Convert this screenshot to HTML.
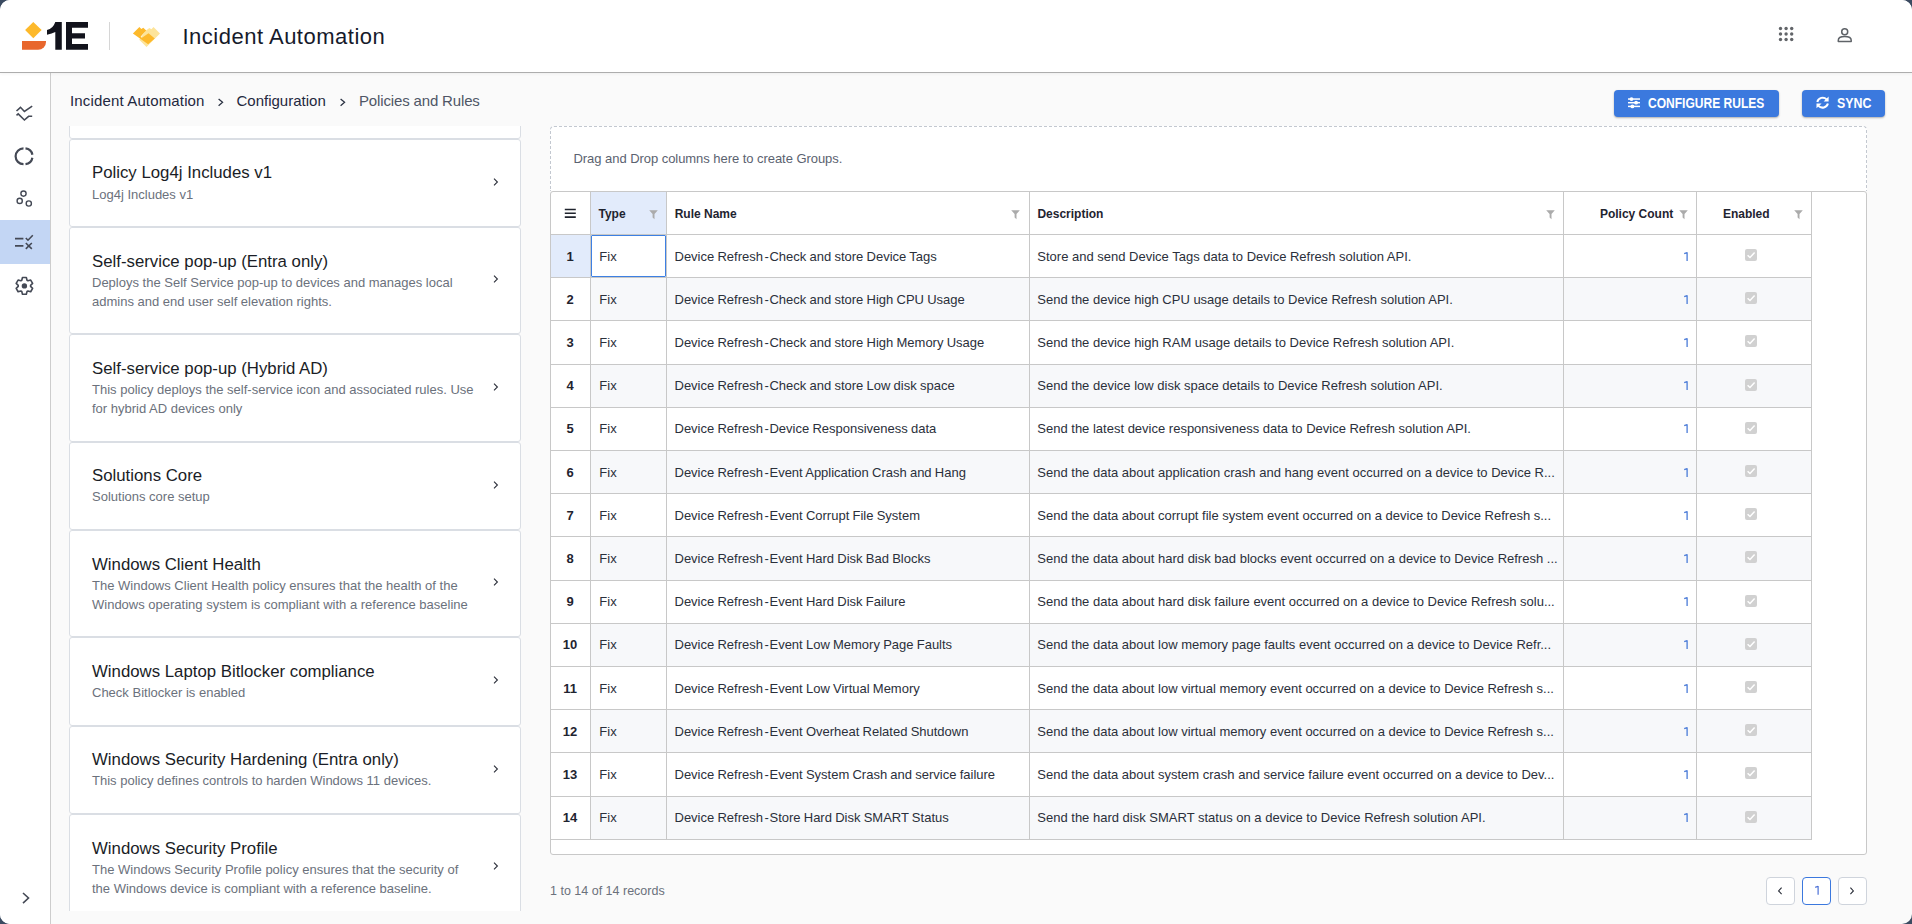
<!DOCTYPE html><html><head><meta charset="utf-8"><style>
*{box-sizing:border-box;margin:0;padding:0}
html,body{width:1912px;height:924px;overflow:hidden;background:#3b4b61;font-family:"Liberation Sans", sans-serif}
.win{position:absolute;left:0;top:0;width:1912px;height:924px;border-radius:10px;overflow:hidden;background:#fafafa}
.abs{position:absolute;white-space:nowrap}
.hdr{position:absolute;left:0;top:0;width:1912px;height:73px;background:#fff;border-bottom:1px solid #adadad;box-shadow:0 1px 3px rgba(0,0,0,.05);z-index:2}
.side{position:absolute;left:0;top:73px;width:51px;height:851px;background:#fff;border-right:1px solid #cdcdcd}
.card{position:absolute;left:69px;width:452px;background:#fff;border:1px solid #dadee4;border-radius:3px}
.ct{position:absolute;left:22px;font-size:16.8px;color:#1a1d26;white-space:nowrap}
.cd{position:absolute;left:22px;font-size:13px;color:#6b717c;white-space:nowrap;line-height:19px}
.chev{position:absolute;left:423px;width:8px;height:10px}
.btn{position:absolute;top:90px;height:27px;background:#3b79de;border-radius:4px;box-shadow:0 1px 2px rgba(0,0,0,.3);color:#fff;font-weight:700;font-size:12px}
.grid{position:absolute;left:550px;top:191px;width:1317px;height:664px;border:1px solid #c8c8c8;border-radius:3px;background:#fff;overflow:hidden}
.gp{position:absolute;left:550px;top:126px;width:1317px;height:65px;border:1px dashed #c3c8d0;border-bottom:none;border-radius:4px 4px 0 0;background:#fff}
.hc{position:absolute;font-size:12px;font-weight:700;color:#1f2430;white-space:nowrap}
.cell{position:absolute;font-size:13px;color:#2b303b;white-space:nowrap;overflow:hidden;text-overflow:ellipsis}
.vl{position:absolute;width:1px;background:#c8c8c8}
.hl{position:absolute;height:1px;background:#c8c8c8}
.pg{position:absolute;top:877px;width:29px;height:28px;border:1px solid #cfd4dc;border-radius:4px;background:#fff}
</style></head><body><div class="win">
<div class="hdr">
<svg class="abs" style="left:0;top:0" width="120" height="72" viewBox="0 0 120 72">
<polygon points="33.3,21.9 41.6,30.1 33.3,38.3 25.1,30.1" fill="#fdb92b"/>
<path d="M22,41 H46 V42 A7.8,7.8 0 0 1 38.2,49.8 H22 Z" fill="#e8662c"/>
<path d="M55.3,22.1 H61.8 V49.8 H55.3 V32 Q52,33.8 47,34.7 V30 Q53,29 55.3,22.1 Z" fill="#12131c"/>
<path d="M66,22.1 H88 V27.8 H72 V33.2 H85 V38.6 H72 V44 H88 V49.8 H66 Z" fill="#12131c"/>
<rect x="109" y="22" width="1" height="28" fill="#d6d6d6"/>
</svg>
<svg class="abs" style="left:130px;top:24px" width="34" height="26" viewBox="130 24 34 26">
<polygon points="145.9,30.6 149.4,27.9 151.4,29.2 153.5,27 160,33.6 146.5,47 139.2,39.8" fill="#fde49a"/>
<polygon points="132.9,33.6 139.4,27.1 141.3,28.9 143.3,27.8 146.2,30.5 140.7,36.6 141.6,38 148.5,33.2 154.8,38.4 148.1,44.2" fill="#fdb92b"/>
</svg>
<div class="abs" style="left:182.5px;top:23.58px;font-size:22px;line-height:26px;letter-spacing:0.5px;color:#161a2b">Incident Automation</div>
<svg class="abs" style="left:1770px;top:20px" width="30" height="30" viewBox="1770 20 30 30"><circle cx="1780.5" cy="28.5" r="1.7" fill="#626569"/><circle cx="1780.5" cy="34.0" r="1.7" fill="#626569"/><circle cx="1780.5" cy="39.5" r="1.7" fill="#626569"/><circle cx="1786.1" cy="28.5" r="1.7" fill="#626569"/><circle cx="1786.1" cy="34.0" r="1.7" fill="#626569"/><circle cx="1786.1" cy="39.5" r="1.7" fill="#626569"/><circle cx="1791.7" cy="28.5" r="1.7" fill="#626569"/><circle cx="1791.7" cy="34.0" r="1.7" fill="#626569"/><circle cx="1791.7" cy="39.5" r="1.7" fill="#626569"/></svg>
<svg class="abs" style="left:1830px;top:20px" width="30" height="30" viewBox="1830 20 30 30">
<circle cx="1844.7" cy="31.7" r="3" fill="none" stroke="#5f6368" stroke-width="1.5"/>
<path d="M1838.3,41.6 V40.3 Q1838.3,36.6 1844.7,36.6 Q1851.2,36.6 1851.2,40.3 V41.6 Z" fill="none" stroke="#5f6368" stroke-width="1.5" stroke-linejoin="round"/>
</svg>
</div>
<div class="side"></div>
<div class="abs" style="left:0;top:220px;width:50px;height:44px;background:#c3d6f4"></div>
<svg class="abs" style="left:0;top:73px" width="50" height="851" viewBox="0 73 50 851">
<g fill="none" stroke="#444955" stroke-width="1.6" stroke-linecap="butt" stroke-linejoin="miter">
<polyline points="16.5,111 20.5,107.3 24.4,111.5 32.2,106.2"/>
<polyline points="16.5,115.3 18.2,113.9 24.4,120 28.6,116.3 32.2,116.3"/>
<path d="M23.5,148.4 A7.9,7.9 0 0 0 23.5,164.2" stroke-width="2.2"/>
<path d="M25.5,148.4 A7.9,7.9 0 0 1 32.4,154.8" stroke-width="2.2"/>
<path d="M32.4,157.8 A7.9,7.9 0 0 1 25.5,164.2" stroke-width="2.2"/>
<circle cx="23.5" cy="193.6" r="2.6" stroke-width="1.4"/>
<circle cx="19.7" cy="200.9" r="2.6" stroke-width="1.4"/>
<circle cx="28.8" cy="203.5" r="2.6" stroke-width="1.4"/>
<line x1="15" y1="238.7" x2="23.4" y2="238.7" stroke-width="1.8"/>
<line x1="15" y1="245.8" x2="23.4" y2="245.8" stroke-width="1.8"/>
<polyline points="25.8,238 28,240.2 32.8,235.3" stroke-width="1.6"/>
<line x1="25.8" y1="243" x2="31.8" y2="248.8" stroke-width="1.6"/>
<line x1="31.8" y1="243" x2="25.8" y2="248.8" stroke-width="1.6"/>
<polyline points="23,893 28.5,898 23,903.2" stroke-width="1.6"/>
</g>
<g transform="translate(24.4,285.9)">
<path d="M-2.62,-5.62 L-1.93,-8.38 L1.93,-8.38 L2.62,-5.62 L3.56,-5.08 L6.29,-5.87 L8.22,-2.51 L6.18,-0.54 L6.18,0.54 L8.22,2.51 L6.29,5.87 L3.56,5.08 L2.62,5.62 L1.93,8.38 L-1.93,8.38 L-2.62,5.62 L-3.56,5.08 L-6.29,5.87 L-8.22,2.51 L-6.18,0.54 L-6.18,-0.54 L-8.22,-2.51 L-6.29,-5.87 L-3.56,-5.08 Z" fill="none" stroke="#444955" stroke-width="1.6" stroke-linejoin="round"/>
<circle cx="0" cy="0" r="2.7" fill="#444955"/>
</g>
</svg>
<div class="abs" style="left:70px;top:92.20px;font-size:15px;line-height:18px;color:#1f2840;letter-spacing:0.15px">Incident Automation</div>
<div class="abs" style="left:236.5px;top:92.20px;font-size:15px;line-height:18px;color:#1f2840">Configuration</div>
<div class="abs" style="left:359px;top:92.20px;font-size:15px;line-height:18px;color:#4f5666;letter-spacing:-0.15px">Policies and Rules</div>
<svg class="abs" style="left:217.6px;top:96px" width="8" height="12" viewBox="0 0 8 12"><polyline points="0.6,2.9 4.6,6.3 0.6,9.8" fill="none" stroke="#2a3142" stroke-width="1.25"/></svg>
<svg class="abs" style="left:339.6px;top:96px" width="8" height="12" viewBox="0 0 8 12"><polyline points="0.6,2.9 4.6,6.3 0.6,9.8" fill="none" stroke="#2a3142" stroke-width="1.25"/></svg>
<div class="btn" style="left:1614px;width:165px"><svg class="abs" style="left:13px;top:5px" width="15" height="14" viewBox="0 0 15 14"><g stroke="#fff" stroke-width="1.5"><line x1="1" y1="4.05" x2="13" y2="4.05"/><line x1="1" y1="7.7" x2="13" y2="7.7"/><line x1="1" y1="11.4" x2="13" y2="11.4"/></g><g fill="#fff"><circle cx="4.5" cy="4.05" r="1.9"/><circle cx="9.1" cy="7.7" r="1.9"/><circle cx="5.4" cy="11.4" r="1.9"/></g></svg><div class="abs" style="left:34.3px;top:4.78px;font-size:14.5px;line-height:16px;transform:scaleX(0.83);transform-origin:0 0">CONFIGURE RULES</div></div>
<div class="btn" style="left:1802px;width:83px"><svg class="abs" style="left:13px;top:5px" width="15" height="15" viewBox="0 0 15 15"><g fill="none" stroke="#fff" stroke-width="2"><path d="M2.3,6.9 A5.5,5.5 0 0 1 11.6,4.4"/><path d="M12.9,8.4 A5.5,5.5 0 0 1 3.5,10.8"/></g><polygon points="8.6,6.4 13.6,6.4 13.6,1.6" fill="#fff"/><polygon points="1.5,8.4 6.6,8.4 1.5,13.2" fill="#fff"/></svg><div class="abs" style="left:35px;top:4.78px;font-size:14.5px;line-height:16px;transform:scaleX(0.853);transform-origin:0 0">SYNC</div></div>
<div class="abs" style="left:69px;top:126px;width:453px;height:785px;overflow:hidden">
<div class="card" style="left:0;top:-100px;height:113px">
</div>
<div class="card" style="left:0;top:13px;height:88px">
<div class="ct" style="top:22.68px;line-height:20px;">Policy Log4j Includes v1</div>
<div class="cd" style="top:45.20px;">Log4j Includes v1</div>
<svg class="chev" style="top:36.8px;left:422.2px" viewBox="0 0 8 10"><polyline points="2,1.6 5.4,5 2,8.4" fill="none" stroke="#2b2f3a" stroke-width="1.1"/></svg>
</div>
<div class="card" style="left:0;top:101px;height:107px">
<div class="ct" style="top:23.68px;line-height:20px;">Self-service pop-up (Entra only)</div>
<div class="cd" style="top:45.20px;">Deploys the Self Service pop-up to devices and manages local<br>admins and end user self elevation rights.</div>
<svg class="chev" style="top:46.3px;left:422.2px" viewBox="0 0 8 10"><polyline points="2,1.6 5.4,5 2,8.4" fill="none" stroke="#2b2f3a" stroke-width="1.1"/></svg>
</div>
<div class="card" style="left:0;top:208px;height:108px">
<div class="ct" style="top:23.68px;line-height:20px;">Self-service pop-up (Hybrid AD)</div>
<div class="cd" style="top:45.20px;">This policy deploys the self-service icon and associated rules. Use<br>for hybrid AD devices only</div>
<svg class="chev" style="top:46.8px;left:422.2px" viewBox="0 0 8 10"><polyline points="2,1.6 5.4,5 2,8.4" fill="none" stroke="#2b2f3a" stroke-width="1.1"/></svg>
</div>
<div class="card" style="left:0;top:316px;height:88px">
<div class="ct" style="top:22.68px;line-height:20px;">Solutions Core</div>
<div class="cd" style="top:44.20px;">Solutions core setup</div>
<svg class="chev" style="top:36.8px;left:422.2px" viewBox="0 0 8 10"><polyline points="2,1.6 5.4,5 2,8.4" fill="none" stroke="#2b2f3a" stroke-width="1.1"/></svg>
</div>
<div class="card" style="left:0;top:404px;height:107px">
<div class="ct" style="top:23.68px;line-height:20px;">Windows Client Health</div>
<div class="cd" style="top:45.20px;">The Windows Client Health policy ensures that the health of the<br>Windows operating system is compliant with a reference baseline</div>
<svg class="chev" style="top:46.3px;left:422.2px" viewBox="0 0 8 10"><polyline points="2,1.6 5.4,5 2,8.4" fill="none" stroke="#2b2f3a" stroke-width="1.1"/></svg>
</div>
<div class="card" style="left:0;top:511px;height:89px">
<div class="ct" style="top:23.68px;line-height:20px;">Windows Laptop Bitlocker compliance</div>
<div class="cd" style="top:45.20px;">Check Bitlocker is enabled</div>
<svg class="chev" style="top:37.3px;left:422.2px" viewBox="0 0 8 10"><polyline points="2,1.6 5.4,5 2,8.4" fill="none" stroke="#2b2f3a" stroke-width="1.1"/></svg>
</div>
<div class="card" style="left:0;top:600px;height:88px">
<div class="ct" style="top:22.68px;line-height:20px;">Windows Security Hardening (Entra only)</div>
<div class="cd" style="top:44.20px;">This policy defines controls to harden Windows 11 devices.</div>
<svg class="chev" style="top:36.8px;left:422.2px" viewBox="0 0 8 10"><polyline points="2,1.6 5.4,5 2,8.4" fill="none" stroke="#2b2f3a" stroke-width="1.1"/></svg>
</div>
<div class="card" style="left:0;top:688px;height:107px">
<div class="ct" style="top:23.68px;line-height:20px;">Windows Security Profile</div>
<div class="cd" style="top:45.20px;">The Windows Security Profile policy ensures that the security of<br>the Windows device is compliant with a reference baseline.</div>
<svg class="chev" style="top:46.3px;left:422.2px" viewBox="0 0 8 10"><polyline points="2,1.6 5.4,5 2,8.4" fill="none" stroke="#2b2f3a" stroke-width="1.1"/></svg>
</div>
</div>
<div class="gp"></div>
<div class="abs" style="left:573.5px;top:150.50px;font-size:13px;line-height:16px;color:#5b6270;letter-spacing:-0.05px">Drag and Drop columns here to create Groups.</div>
<div class="grid">
<div class="abs" style="left:40px;top:86.2px;width:1220px;height:42.2px;background:#f7f8fa"></div>
<div class="abs" style="left:40px;top:172.6px;width:1220px;height:42.2px;background:#f7f8fa"></div>
<div class="abs" style="left:40px;top:259.0px;width:1220px;height:42.2px;background:#f7f8fa"></div>
<div class="abs" style="left:40px;top:345.4px;width:1220px;height:42.2px;background:#f7f8fa"></div>
<div class="abs" style="left:40px;top:431.8px;width:1220px;height:42.2px;background:#f7f8fa"></div>
<div class="abs" style="left:40px;top:518.2px;width:1220px;height:42.2px;background:#f7f8fa"></div>
<div class="abs" style="left:40px;top:604.6px;width:1220px;height:42.2px;background:#f7f8fa"></div>
<div class="abs" style="left:40px;top:0;width:75px;height:42px;background:#e2ebfb"></div>
<div class="abs" style="left:0;top:43px;width:39px;height:42px;background:#e2ebfb"></div>
<div class="hl" style="left:0;top:42px;width:1260px"></div>
<div class="hl" style="left:0;top:85.2px;width:1260px"></div>
<div class="hl" style="left:0;top:128.4px;width:1260px"></div>
<div class="hl" style="left:0;top:171.6px;width:1260px"></div>
<div class="hl" style="left:0;top:214.8px;width:1260px"></div>
<div class="hl" style="left:0;top:258.0px;width:1260px"></div>
<div class="hl" style="left:0;top:301.2px;width:1260px"></div>
<div class="hl" style="left:0;top:344.4px;width:1260px"></div>
<div class="hl" style="left:0;top:387.6px;width:1260px"></div>
<div class="hl" style="left:0;top:430.8px;width:1260px"></div>
<div class="hl" style="left:0;top:474.0px;width:1260px"></div>
<div class="hl" style="left:0;top:517.2px;width:1260px"></div>
<div class="hl" style="left:0;top:560.4px;width:1260px"></div>
<div class="hl" style="left:0;top:603.6px;width:1260px"></div>
<div class="hl" style="left:0;top:646.8px;width:1260px"></div>
<div class="vl" style="left:39px;top:0;height:648px"></div>
<div class="vl" style="left:115px;top:0;height:648px"></div>
<div class="vl" style="left:478px;top:0;height:648px"></div>
<div class="vl" style="left:1012px;top:0;height:648px"></div>
<div class="vl" style="left:1145px;top:0;height:648px"></div>
<div class="vl" style="left:1260px;top:0;height:648px"></div>
<svg class="abs" style="left:13px;top:16px" width="13" height="11" viewBox="0 0 13 11"><g stroke="#20242e" stroke-width="1.6"><line x1="0.8" y1="1.5" x2="11.8" y2="1.5"/><line x1="0.8" y1="5.3" x2="11.8" y2="5.3"/><line x1="0.8" y1="9.1" x2="11.8" y2="9.1"/></g></svg>
<div class="hc" style="left:47.5px;top:13.74px;line-height:16px">Type</div>
<svg class="abs" style="left:98.2px;top:18.0px" width="10" height="10" viewBox="0 0 10 10"><path d="M0.2,0.2 H8.8 L5.5,3.9 V9.2 L3.6,7.6 V3.9 Z" fill="#ababab"/></svg>
<div class="hc" style="left:123.7px;top:13.74px;line-height:16px">Rule Name</div>
<svg class="abs" style="left:460.1px;top:18.0px" width="10" height="10" viewBox="0 0 10 10"><path d="M0.2,0.2 H8.8 L5.5,3.9 V9.2 L3.6,7.6 V3.9 Z" fill="#ababab"/></svg>
<div class="hc" style="left:486.4px;top:13.74px;line-height:16px">Description</div>
<svg class="abs" style="left:995.0px;top:18.0px" width="10" height="10" viewBox="0 0 10 10"><path d="M0.2,0.2 H8.8 L5.5,3.9 V9.2 L3.6,7.6 V3.9 Z" fill="#ababab"/></svg>
<div class="hc" style="left:1048.9px;top:13.74px;line-height:16px">Policy Count</div>
<svg class="abs" style="left:1128.1px;top:18.0px" width="10" height="10" viewBox="0 0 10 10"><path d="M0.2,0.2 H8.8 L5.5,3.9 V9.2 L3.6,7.6 V3.9 Z" fill="#ababab"/></svg>
<div class="hc" style="left:1171.9px;top:13.74px;line-height:16px">Enabled</div>
<svg class="abs" style="left:1242.8px;top:18.0px" width="10" height="10" viewBox="0 0 10 10"><path d="M0.2,0.2 H8.8 L5.5,3.9 V9.2 L3.6,7.6 V3.9 Z" fill="#ababab"/></svg>
<div class="hc" style="left:-1px;width:40px;text-align:center;top:56.60px;line-height:16px;font-size:13px">1</div>
<div class="cell" style="left:48.299999999999955px;top:56.60px;line-height:16px">Fix</div>
<div class="cell" style="left:123.5px;width:350px;top:56.60px;line-height:16px;word-spacing:-0.4px">Device Refresh<span style="margin-right:-2px;word-spacing:0"> </span>-<span style="margin-right:-3.1px;word-spacing:0"> </span>Check and store Device Tags</div>
<div class="cell" style="left:486.29999999999995px;width:523px;top:56.60px;line-height:16px;text-overflow:clip">Store and send Device Tags data to Device Refresh solution API.</div>
<svg class="abs" style="left:1131px;top:58.0px" width="8" height="13" viewBox="0 0 8 13"><path d="M2.2,3.7 L5.1,2.6 M5.1,2.3 V11" fill="none" stroke="#4a7bd8" stroke-width="1.3"/></svg>
<div class="abs" style="left:1194px;top:57.0px;width:12px;height:12px;border-radius:2px;background:#d1d1d1"><svg class="abs" style="left:0;top:0" width="12" height="12" viewBox="0 0 12 12"><polyline points="2.6,6.2 5,8.5 9.6,3.6" fill="none" stroke="#fff" stroke-width="1.5"/></svg></div>
<div class="hc" style="left:-1px;width:40px;text-align:center;top:99.80px;line-height:16px;font-size:13px">2</div>
<div class="cell" style="left:48.299999999999955px;top:99.80px;line-height:16px">Fix</div>
<div class="cell" style="left:123.5px;width:350px;top:99.80px;line-height:16px;word-spacing:-0.4px">Device Refresh<span style="margin-right:-2px;word-spacing:0"> </span>-<span style="margin-right:-3.1px;word-spacing:0"> </span>Check and store High CPU Usage</div>
<div class="cell" style="left:486.29999999999995px;width:523px;top:99.80px;line-height:16px;text-overflow:clip">Send the device high CPU usage details to Device Refresh solution API.</div>
<svg class="abs" style="left:1131px;top:101.0px" width="8" height="13" viewBox="0 0 8 13"><path d="M2.2,3.7 L5.1,2.6 M5.1,2.3 V11" fill="none" stroke="#4a7bd8" stroke-width="1.3"/></svg>
<div class="abs" style="left:1194px;top:100.2px;width:12px;height:12px;border-radius:2px;background:#d1d1d1"><svg class="abs" style="left:0;top:0" width="12" height="12" viewBox="0 0 12 12"><polyline points="2.6,6.2 5,8.5 9.6,3.6" fill="none" stroke="#fff" stroke-width="1.5"/></svg></div>
<div class="hc" style="left:-1px;width:40px;text-align:center;top:143.00px;line-height:16px;font-size:13px">3</div>
<div class="cell" style="left:48.299999999999955px;top:143.00px;line-height:16px">Fix</div>
<div class="cell" style="left:123.5px;width:350px;top:143.00px;line-height:16px;word-spacing:-0.4px">Device Refresh<span style="margin-right:-2px;word-spacing:0"> </span>-<span style="margin-right:-3.1px;word-spacing:0"> </span>Check and store High Memory Usage</div>
<div class="cell" style="left:486.29999999999995px;width:523px;top:143.00px;line-height:16px;text-overflow:clip">Send the device high RAM usage details to Device Refresh solution API.</div>
<svg class="abs" style="left:1131px;top:144.0px" width="8" height="13" viewBox="0 0 8 13"><path d="M2.2,3.7 L5.1,2.6 M5.1,2.3 V11" fill="none" stroke="#4a7bd8" stroke-width="1.3"/></svg>
<div class="abs" style="left:1194px;top:143.4px;width:12px;height:12px;border-radius:2px;background:#d1d1d1"><svg class="abs" style="left:0;top:0" width="12" height="12" viewBox="0 0 12 12"><polyline points="2.6,6.2 5,8.5 9.6,3.6" fill="none" stroke="#fff" stroke-width="1.5"/></svg></div>
<div class="hc" style="left:-1px;width:40px;text-align:center;top:186.20px;line-height:16px;font-size:13px">4</div>
<div class="cell" style="left:48.299999999999955px;top:186.20px;line-height:16px">Fix</div>
<div class="cell" style="left:123.5px;width:350px;top:186.20px;line-height:16px;word-spacing:-0.4px">Device Refresh<span style="margin-right:-2px;word-spacing:0"> </span>-<span style="margin-right:-3.1px;word-spacing:0"> </span>Check and store Low disk space</div>
<div class="cell" style="left:486.29999999999995px;width:523px;top:186.20px;line-height:16px;text-overflow:clip">Send the device low disk space details to Device Refresh solution API.</div>
<svg class="abs" style="left:1131px;top:187.0px" width="8" height="13" viewBox="0 0 8 13"><path d="M2.2,3.7 L5.1,2.6 M5.1,2.3 V11" fill="none" stroke="#4a7bd8" stroke-width="1.3"/></svg>
<div class="abs" style="left:1194px;top:186.6px;width:12px;height:12px;border-radius:2px;background:#d1d1d1"><svg class="abs" style="left:0;top:0" width="12" height="12" viewBox="0 0 12 12"><polyline points="2.6,6.2 5,8.5 9.6,3.6" fill="none" stroke="#fff" stroke-width="1.5"/></svg></div>
<div class="hc" style="left:-1px;width:40px;text-align:center;top:229.40px;line-height:16px;font-size:13px">5</div>
<div class="cell" style="left:48.299999999999955px;top:229.40px;line-height:16px">Fix</div>
<div class="cell" style="left:123.5px;width:350px;top:229.40px;line-height:16px;word-spacing:-0.4px">Device Refresh<span style="margin-right:-2px;word-spacing:0"> </span>-<span style="margin-right:-3.1px;word-spacing:0"> </span>Device Responsiveness data</div>
<div class="cell" style="left:486.29999999999995px;width:523px;top:229.40px;line-height:16px;text-overflow:clip">Send the latest device responsiveness data to Device Refresh solution API.</div>
<svg class="abs" style="left:1131px;top:230.0px" width="8" height="13" viewBox="0 0 8 13"><path d="M2.2,3.7 L5.1,2.6 M5.1,2.3 V11" fill="none" stroke="#4a7bd8" stroke-width="1.3"/></svg>
<div class="abs" style="left:1194px;top:229.8px;width:12px;height:12px;border-radius:2px;background:#d1d1d1"><svg class="abs" style="left:0;top:0" width="12" height="12" viewBox="0 0 12 12"><polyline points="2.6,6.2 5,8.5 9.6,3.6" fill="none" stroke="#fff" stroke-width="1.5"/></svg></div>
<div class="hc" style="left:-1px;width:40px;text-align:center;top:272.60px;line-height:16px;font-size:13px">6</div>
<div class="cell" style="left:48.299999999999955px;top:272.60px;line-height:16px">Fix</div>
<div class="cell" style="left:123.5px;width:350px;top:272.60px;line-height:16px;word-spacing:-0.4px">Device Refresh<span style="margin-right:-2px;word-spacing:0"> </span>-<span style="margin-right:-3.1px;word-spacing:0"> </span>Event Application Crash and Hang</div>
<div class="cell" style="left:486.29999999999995px;width:523px;top:272.60px;line-height:16px;text-overflow:clip">Send the data about application crash and hang event occurred on a device to Device R...</div>
<svg class="abs" style="left:1131px;top:274.0px" width="8" height="13" viewBox="0 0 8 13"><path d="M2.2,3.7 L5.1,2.6 M5.1,2.3 V11" fill="none" stroke="#4a7bd8" stroke-width="1.3"/></svg>
<div class="abs" style="left:1194px;top:273.0px;width:12px;height:12px;border-radius:2px;background:#d1d1d1"><svg class="abs" style="left:0;top:0" width="12" height="12" viewBox="0 0 12 12"><polyline points="2.6,6.2 5,8.5 9.6,3.6" fill="none" stroke="#fff" stroke-width="1.5"/></svg></div>
<div class="hc" style="left:-1px;width:40px;text-align:center;top:315.80px;line-height:16px;font-size:13px">7</div>
<div class="cell" style="left:48.299999999999955px;top:315.80px;line-height:16px">Fix</div>
<div class="cell" style="left:123.5px;width:350px;top:315.80px;line-height:16px;word-spacing:-0.4px">Device Refresh<span style="margin-right:-2px;word-spacing:0"> </span>-<span style="margin-right:-3.1px;word-spacing:0"> </span>Event Corrupt File System</div>
<div class="cell" style="left:486.29999999999995px;width:523px;top:315.80px;line-height:16px;text-overflow:clip">Send the data about corrupt file system event occurred on a device to Device Refresh s...</div>
<svg class="abs" style="left:1131px;top:317.0px" width="8" height="13" viewBox="0 0 8 13"><path d="M2.2,3.7 L5.1,2.6 M5.1,2.3 V11" fill="none" stroke="#4a7bd8" stroke-width="1.3"/></svg>
<div class="abs" style="left:1194px;top:316.2px;width:12px;height:12px;border-radius:2px;background:#d1d1d1"><svg class="abs" style="left:0;top:0" width="12" height="12" viewBox="0 0 12 12"><polyline points="2.6,6.2 5,8.5 9.6,3.6" fill="none" stroke="#fff" stroke-width="1.5"/></svg></div>
<div class="hc" style="left:-1px;width:40px;text-align:center;top:359.00px;line-height:16px;font-size:13px">8</div>
<div class="cell" style="left:48.299999999999955px;top:359.00px;line-height:16px">Fix</div>
<div class="cell" style="left:123.5px;width:350px;top:359.00px;line-height:16px;word-spacing:-0.4px">Device Refresh<span style="margin-right:-2px;word-spacing:0"> </span>-<span style="margin-right:-3.1px;word-spacing:0"> </span>Event Hard Disk Bad Blocks</div>
<div class="cell" style="left:486.29999999999995px;width:523px;top:359.00px;line-height:16px;text-overflow:clip">Send the data about hard disk bad blocks event occurred on a device to Device Refresh ...</div>
<svg class="abs" style="left:1131px;top:360.0px" width="8" height="13" viewBox="0 0 8 13"><path d="M2.2,3.7 L5.1,2.6 M5.1,2.3 V11" fill="none" stroke="#4a7bd8" stroke-width="1.3"/></svg>
<div class="abs" style="left:1194px;top:359.4px;width:12px;height:12px;border-radius:2px;background:#d1d1d1"><svg class="abs" style="left:0;top:0" width="12" height="12" viewBox="0 0 12 12"><polyline points="2.6,6.2 5,8.5 9.6,3.6" fill="none" stroke="#fff" stroke-width="1.5"/></svg></div>
<div class="hc" style="left:-1px;width:40px;text-align:center;top:402.20px;line-height:16px;font-size:13px">9</div>
<div class="cell" style="left:48.299999999999955px;top:402.20px;line-height:16px">Fix</div>
<div class="cell" style="left:123.5px;width:350px;top:402.20px;line-height:16px;word-spacing:-0.4px">Device Refresh<span style="margin-right:-2px;word-spacing:0"> </span>-<span style="margin-right:-3.1px;word-spacing:0"> </span>Event Hard Disk Failure</div>
<div class="cell" style="left:486.29999999999995px;width:523px;top:402.20px;line-height:16px;text-overflow:clip">Send the data about hard disk failure event occurred on a device to Device Refresh solu...</div>
<svg class="abs" style="left:1131px;top:403.0px" width="8" height="13" viewBox="0 0 8 13"><path d="M2.2,3.7 L5.1,2.6 M5.1,2.3 V11" fill="none" stroke="#4a7bd8" stroke-width="1.3"/></svg>
<div class="abs" style="left:1194px;top:402.6px;width:12px;height:12px;border-radius:2px;background:#d1d1d1"><svg class="abs" style="left:0;top:0" width="12" height="12" viewBox="0 0 12 12"><polyline points="2.6,6.2 5,8.5 9.6,3.6" fill="none" stroke="#fff" stroke-width="1.5"/></svg></div>
<div class="hc" style="left:-1px;width:40px;text-align:center;top:445.40px;line-height:16px;font-size:13px">10</div>
<div class="cell" style="left:48.299999999999955px;top:445.40px;line-height:16px">Fix</div>
<div class="cell" style="left:123.5px;width:350px;top:445.40px;line-height:16px;word-spacing:-0.4px">Device Refresh<span style="margin-right:-2px;word-spacing:0"> </span>-<span style="margin-right:-3.1px;word-spacing:0"> </span>Event Low Memory Page Faults</div>
<div class="cell" style="left:486.29999999999995px;width:523px;top:445.40px;line-height:16px;text-overflow:clip">Send the data about low memory page faults event occurred on a device to Device Refr...</div>
<svg class="abs" style="left:1131px;top:446.0px" width="8" height="13" viewBox="0 0 8 13"><path d="M2.2,3.7 L5.1,2.6 M5.1,2.3 V11" fill="none" stroke="#4a7bd8" stroke-width="1.3"/></svg>
<div class="abs" style="left:1194px;top:445.8px;width:12px;height:12px;border-radius:2px;background:#d1d1d1"><svg class="abs" style="left:0;top:0" width="12" height="12" viewBox="0 0 12 12"><polyline points="2.6,6.2 5,8.5 9.6,3.6" fill="none" stroke="#fff" stroke-width="1.5"/></svg></div>
<div class="hc" style="left:-1px;width:40px;text-align:center;top:488.60px;line-height:16px;font-size:13px">11</div>
<div class="cell" style="left:48.299999999999955px;top:488.60px;line-height:16px">Fix</div>
<div class="cell" style="left:123.5px;width:350px;top:488.60px;line-height:16px;word-spacing:-0.4px">Device Refresh<span style="margin-right:-2px;word-spacing:0"> </span>-<span style="margin-right:-3.1px;word-spacing:0"> </span>Event Low Virtual Memory</div>
<div class="cell" style="left:486.29999999999995px;width:523px;top:488.60px;line-height:16px;text-overflow:clip">Send the data about low virtual memory event occurred on a device to Device Refresh s...</div>
<svg class="abs" style="left:1131px;top:490.0px" width="8" height="13" viewBox="0 0 8 13"><path d="M2.2,3.7 L5.1,2.6 M5.1,2.3 V11" fill="none" stroke="#4a7bd8" stroke-width="1.3"/></svg>
<div class="abs" style="left:1194px;top:489.0px;width:12px;height:12px;border-radius:2px;background:#d1d1d1"><svg class="abs" style="left:0;top:0" width="12" height="12" viewBox="0 0 12 12"><polyline points="2.6,6.2 5,8.5 9.6,3.6" fill="none" stroke="#fff" stroke-width="1.5"/></svg></div>
<div class="hc" style="left:-1px;width:40px;text-align:center;top:531.80px;line-height:16px;font-size:13px">12</div>
<div class="cell" style="left:48.299999999999955px;top:531.80px;line-height:16px">Fix</div>
<div class="cell" style="left:123.5px;width:350px;top:531.80px;line-height:16px;word-spacing:-0.4px">Device Refresh<span style="margin-right:-2px;word-spacing:0"> </span>-<span style="margin-right:-3.1px;word-spacing:0"> </span>Event Overheat Related Shutdown</div>
<div class="cell" style="left:486.29999999999995px;width:523px;top:531.80px;line-height:16px;text-overflow:clip">Send the data about low virtual memory event occurred on a device to Device Refresh s...</div>
<svg class="abs" style="left:1131px;top:533.0px" width="8" height="13" viewBox="0 0 8 13"><path d="M2.2,3.7 L5.1,2.6 M5.1,2.3 V11" fill="none" stroke="#4a7bd8" stroke-width="1.3"/></svg>
<div class="abs" style="left:1194px;top:532.2px;width:12px;height:12px;border-radius:2px;background:#d1d1d1"><svg class="abs" style="left:0;top:0" width="12" height="12" viewBox="0 0 12 12"><polyline points="2.6,6.2 5,8.5 9.6,3.6" fill="none" stroke="#fff" stroke-width="1.5"/></svg></div>
<div class="hc" style="left:-1px;width:40px;text-align:center;top:575.00px;line-height:16px;font-size:13px">13</div>
<div class="cell" style="left:48.299999999999955px;top:575.00px;line-height:16px">Fix</div>
<div class="cell" style="left:123.5px;width:350px;top:575.00px;line-height:16px;word-spacing:-0.4px">Device Refresh<span style="margin-right:-2px;word-spacing:0"> </span>-<span style="margin-right:-3.1px;word-spacing:0"> </span>Event System Crash and service failure</div>
<div class="cell" style="left:486.29999999999995px;width:523px;top:575.00px;line-height:16px;text-overflow:clip">Send the data about system crash and service failure event occurred on a device to Dev...</div>
<svg class="abs" style="left:1131px;top:576.0px" width="8" height="13" viewBox="0 0 8 13"><path d="M2.2,3.7 L5.1,2.6 M5.1,2.3 V11" fill="none" stroke="#4a7bd8" stroke-width="1.3"/></svg>
<div class="abs" style="left:1194px;top:575.4px;width:12px;height:12px;border-radius:2px;background:#d1d1d1"><svg class="abs" style="left:0;top:0" width="12" height="12" viewBox="0 0 12 12"><polyline points="2.6,6.2 5,8.5 9.6,3.6" fill="none" stroke="#fff" stroke-width="1.5"/></svg></div>
<div class="hc" style="left:-1px;width:40px;text-align:center;top:618.20px;line-height:16px;font-size:13px">14</div>
<div class="cell" style="left:48.299999999999955px;top:618.20px;line-height:16px">Fix</div>
<div class="cell" style="left:123.5px;width:350px;top:618.20px;line-height:16px;word-spacing:-0.4px">Device Refresh<span style="margin-right:-2px;word-spacing:0"> </span>-<span style="margin-right:-3.1px;word-spacing:0"> </span>Store Hard Disk SMART Status</div>
<div class="cell" style="left:486.29999999999995px;width:523px;top:618.20px;line-height:16px;text-overflow:clip">Send the hard disk SMART status on a device to Device Refresh solution API.</div>
<svg class="abs" style="left:1131px;top:619.0px" width="8" height="13" viewBox="0 0 8 13"><path d="M2.2,3.7 L5.1,2.6 M5.1,2.3 V11" fill="none" stroke="#4a7bd8" stroke-width="1.3"/></svg>
<div class="abs" style="left:1194px;top:618.6px;width:12px;height:12px;border-radius:2px;background:#d1d1d1"><svg class="abs" style="left:0;top:0" width="12" height="12" viewBox="0 0 12 12"><polyline points="2.6,6.2 5,8.5 9.6,3.6" fill="none" stroke="#fff" stroke-width="1.5"/></svg></div>
<div class="abs" style="left:40px;top:43px;width:75px;height:42px;border:1px solid #3d80e3;border-radius:1px"></div>
</div>
<div class="abs" style="left:550px;top:883.27px;font-size:12.5px;line-height:16px;color:#6b717c">1 to 14 of 14 records</div>
<div class="pg" style="left:1766px"><svg class="abs" style="left:9.3px;top:6.8px" width="10" height="11" viewBox="0 0 10 11"><polyline points="5.6,2.6 2.6,5.9 5.6,9.2" fill="none" stroke="#2b2f3a" stroke-width="1.1"/></svg></div>
<div class="pg" style="left:1802px;border:1.5px solid #3b78de"><svg class="abs" style="left:8.5px;top:6.5px" width="10" height="13" viewBox="0 0 10 13"><path d="M3.2,2.4 L6.1,1.3 M6.1,1 V9.7" fill="none" stroke="#4a6fd6" stroke-width="1.2"/></svg></div>
<div class="pg" style="left:1838px"><svg class="abs" style="left:8.4px;top:6.8px" width="10" height="11" viewBox="0 0 10 11"><polyline points="3.4,2.6 6.4,5.9 3.4,9.2" fill="none" stroke="#2b2f3a" stroke-width="1.1"/></svg></div>
</div></body></html>
